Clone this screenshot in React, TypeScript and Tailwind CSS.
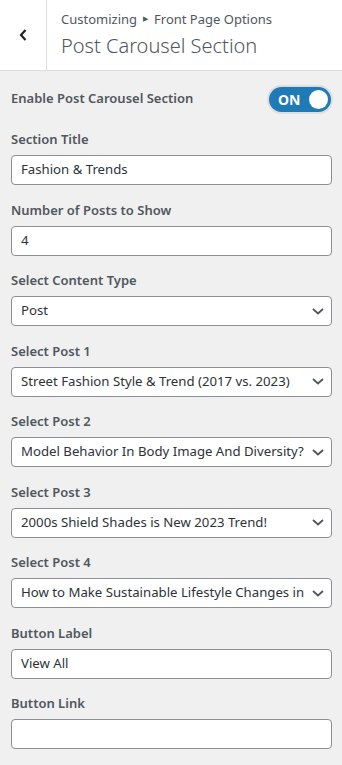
import React from 'react';

const font = {fontFamily: '"Noto Sans", "Open Sans", sans-serif'};

const fields = [
  {label: 'Section Title', type: 'text', value: 'Fashion & Trends'},
  {label: 'Number of Posts to Show', type: 'text', value: '4'},
  {label: 'Select Content Type', type: 'select', value: 'Post'},
  {label: 'Select Post 1', type: 'select', value: 'Street Fashion Style & Trend (2017 vs. 2023)'},
  {label: 'Select Post 2', type: 'select', value: 'Model Behavior In Body Image And Diversity?'},
  {label: 'Select Post 3', type: 'select', value: '2000s Shield Shades is New 2023 Trend!'},
  {label: 'Select Post 4', type: 'select', value: 'How to Make Sustainable Lifestyle Changes in 2023'},
  {label: 'Button Label', type: 'text', value: 'View All'},
  {label: 'Button Link', type: 'text', value: ''},
];

function Chevron() {
  return (
    <svg width="12" height="7" viewBox="0 0 12 7" className="shrink-0">
      <path d="M1 1l5 4.5L11 1" fill="none" stroke="#50575e" strokeWidth="1.8"/>
    </svg>
  );
}

function Field({label, type, value}: {label: string; type: string; value: string}) {
  return (
    <div>
      <div className="h-5 leading-5 text-[13px] font-semibold text-[#50575e]">{label}</div>
      <div className="mt-[6px] h-[30px] bg-white border border-[#8c8f94] rounded-[4px] flex items-center pl-[9px] pr-[7px] gap-2">
        <span className="flex-1 min-w-0 whitespace-nowrap overflow-hidden text-[13.2px] text-[#2c3338]">{value}</span>
        {type === 'select' && <Chevron/>}
      </div>
    </div>
  );
}

export default function App() {
  return (
    <div style={font} className="w-[342px] h-[765px] bg-[#f0f0f0] overflow-hidden">
      {/* header */}
      <header className="h-[71px] bg-white border-b border-[#dcdcde] flex">
        <button className="w-[47px] border-r border-[#dcdcde] flex items-center justify-center">
          <svg width="10" height="14" viewBox="0 0 10 14">
            <path d="M7.5 2L3 7l4.5 5" fill="none" stroke="#1d2327" strokeWidth="2.2"/>
          </svg>
        </button>
        <div className="pl-[14px] pt-[9px]">
          <div className="text-[13px] leading-5 text-[#50575e] flex items-center">
            <span>Customizing</span>
            <span className="text-[7px] mx-[6px]">▶</span>
            <span>Front Page Options</span>
          </div>
          <h1 className="mt-[3px] text-[20px] leading-7 font-light text-[#50575e]">Post Carousel Section</h1>
        </div>
      </header>

      {/* body */}
      <div className="pl-[11px] pr-[10px] pt-[16px]">
        <div className="h-6 flex items-center justify-between">
          <span className="text-[13px] font-semibold text-[#50575e]">Enable Post Carousel Section</span>
          <div className="mr-[1px] w-[62px] h-[25px] rounded-full bg-[#1f7bb6] ring-2 ring-[#dedede] flex items-center justify-between pl-[9px] pr-[3px]">
            <span className="text-[14px] font-bold text-white">ON</span>
            <span className="w-[19px] h-[19px] rounded-full bg-white"/>
          </div>
        </div>

        <div className="mt-[18px] flex flex-col gap-[14.5px]">
          {fields.map(f => (
            <Field key={f.label} {...f}/>
          ))}
        </div>
      </div>
    </div>
  );
}
